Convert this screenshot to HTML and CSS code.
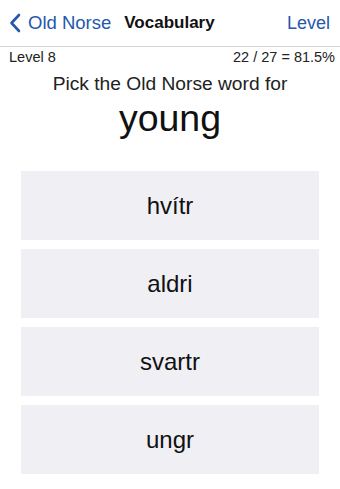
FILE: index.html
```html
<!DOCTYPE html>
<html lang="en">
<head>
    <meta charset="UTF-8">
    <meta name="viewport" content="width=device-width, initial-scale=1.0">
    <title>Vocabulary</title>
    <link rel="stylesheet" href="styles.css">
</head>
<body>
    <!-- Navigation bar -->
    <div class="nav-bar">
        <a class="nav-back" href="#">
            <svg class="chevron" width="12" height="20" viewBox="0 0 12 20">
                <path d="M10 2 L2.5 10 L10 18" fill="none" stroke="currentColor" stroke-width="2.6" stroke-linecap="round" stroke-linejoin="round"/>
            </svg>
            <span>Old Norse</span>
        </a>
        <span class="nav-title">Vocabulary</span>
        <a class="nav-right" href="#">Level</a>
    </div>

    <!-- Status line -->
    <div class="status-row">
        <span>Level 8</span>
        <span>22 / 27 = 81.5%</span>
    </div>

    <!-- Question -->
    <div class="question">
        <p class="prompt">Pick the Old Norse word for</p>
        <p class="target-word">young</p>
    </div>

    <!-- Answers -->
    <div class="answers">
        <button class="answer">hvítr</button>
        <button class="answer">aldri</button>
        <button class="answer">svartr</button>
        <button class="answer">ungr</button>
    </div>
</body>
</html>
```

FILE: styles.css
```css
body {
    margin: 0;
    padding: 0;
    font-family: 'Liberation Sans', Arial, sans-serif;
    background-color: #fff;
    color: #111;
    width: 340px;
    height: 489px;
    overflow: hidden;
}

/* Navigation bar */
.nav-bar {
    display: flex;
    align-items: center;
    height: 47px;
    padding: 0 10px 0 9px;
    border-bottom: 1px solid #d4d4d8;
    box-sizing: border-box;
}

.nav-back {
    display: flex;
    align-items: center;
    gap: 7px;
    color: #2557ad;
    text-decoration: none;
    font-size: 18.5px;
}

.chevron {
    display: block;
}

.nav-title {
    margin-left: 13px;
    font-size: 17px;
    font-weight: bold;
    color: #111;
}

.nav-right {
    margin-left: auto;
    color: #2557ad;
    text-decoration: none;
    font-size: 18px;
}

/* Status */
.status-row {
    display: flex;
    justify-content: space-between;
    padding: 2px 5px 0 9px;
    font-size: 14.5px;
    line-height: 17px;
    color: #222;
}

/* Question */
.question {
    text-align: center;
}

.prompt {
    margin: 7px 0 0;
    font-size: 19.2px;
    line-height: 22px;
    color: #222;
}

.target-word {
    margin: 0;
    font-size: 37.5px;
    line-height: 46px;
    color: #111;
}

/* Answer buttons */
.answers {
    display: flex;
    flex-direction: column;
    gap: 9px;
    padding: 0 21px;
    margin-top: 30px;
}

.answer {
    height: 69px;
    border: none;
    background-color: #efeff4;
    font-family: 'Liberation Sans', Arial, sans-serif;
    font-size: 24px;
    color: #111;
    cursor: pointer;
}
```
